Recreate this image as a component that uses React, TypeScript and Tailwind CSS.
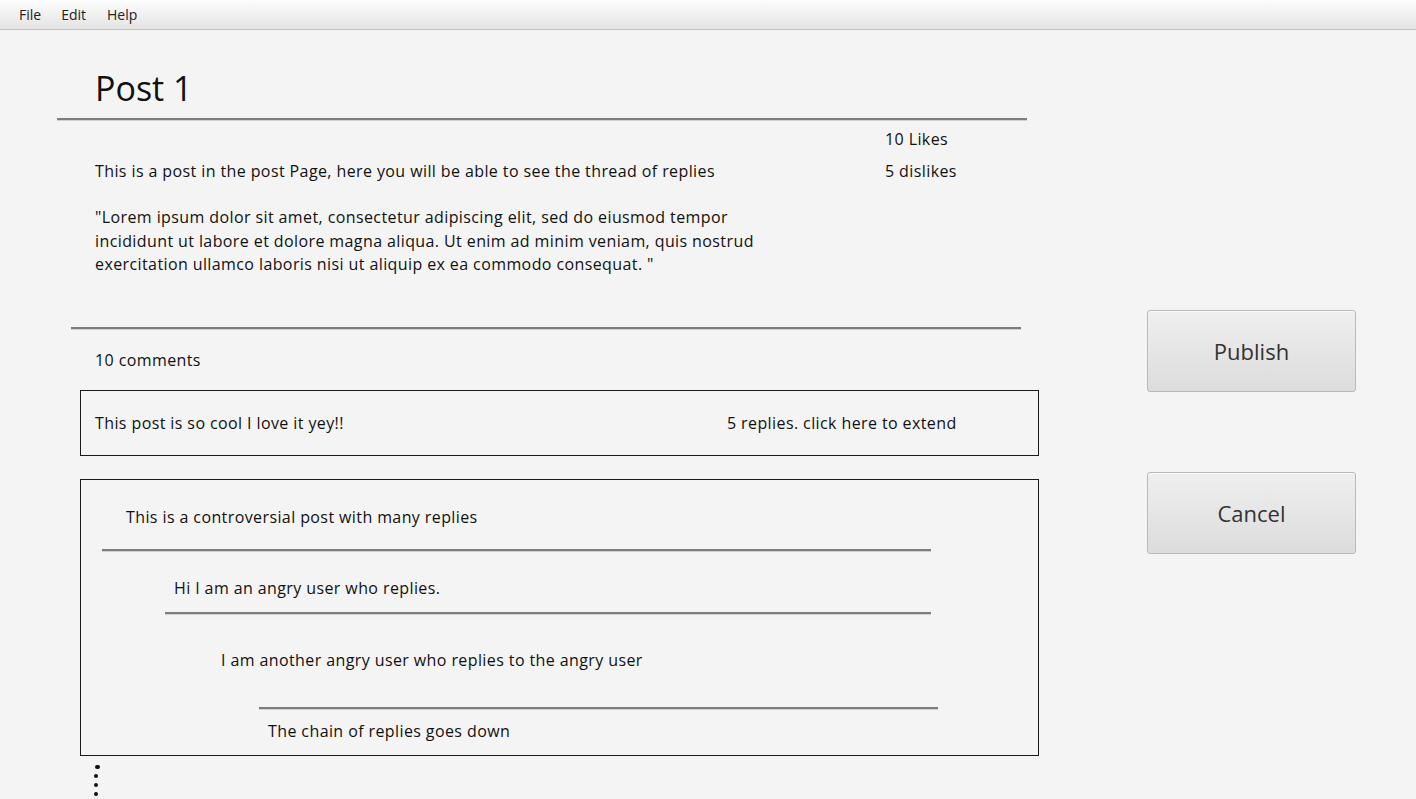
import React from "react";

const font = { fontFamily: '"Open Sans", "Noto Sans", sans-serif' };

function HLine({ cls }: { cls: string }) {
  return <div className={`h-[2px] bg-[#7d7d7d] shadow-[0_1px_0_#d0d0d0] ${cls}`} />;
}

function Btn({ label, cls }: { label: string; cls: string }) {
  return (
    <button
      className={`w-[209px] h-[82px] rounded-[3px] border border-[#b9b9b9] bg-gradient-to-b from-[#efefef] to-[#dcdcdc] shadow-[inset_0_1px_0_#fafafa] text-[22px] text-[#333] ${cls}`}
      style={font}
    >
      {label}
    </button>
  );
}

export default function App() {
  return (
    <div className="w-[1416px] h-[799px] overflow-hidden bg-[#f4f4f4] text-[#111] flex flex-col" style={font}>
      <div className="h-[30px] shrink-0 flex items-center bg-gradient-to-b from-[#fdfdfd] to-[#e4e4e4] border-b border-[#c2c2c2] text-[14px] text-[#222]">
        <span className="ml-[19px]">File</span>
        <span className="ml-[20px]">Edit</span>
        <span className="ml-[21px]">Help</span>
      </div>
      <div className="flex">
        <div className="w-[1045px] flex flex-col text-[16px] tracking-[0.4px]">
          <div className="mt-[38px] h-[40px] pl-[95px] text-[34px] leading-[40px] tracking-normal">Post 1</div>
          <HLine cls="mt-[10px] ml-[57px] w-[970px]" />
          <div className="mt-[8px] h-[22px] leading-[22px] pl-[885px]">10 Likes</div>
          <div className="mt-[10px] h-[22px] leading-[22px] flex pl-[95px]">
            <span className="w-[790px]">This is a post in the post Page, here you will be able to see the thread of replies</span>
            <span>5 dislikes</span>
          </div>
          <div className="mt-[24px] pl-[95px] leading-[23.5px] whitespace-nowrap">
            "Lorem ipsum dolor sit amet, consectetur adipiscing elit, sed do eiusmod tempor
            <br />
            incididunt ut labore et dolore magna aliqua. Ut enim ad minim veniam, quis nostrud
            <br />
            exercitation ullamco laboris nisi ut aliquip ex ea commodo consequat. "
          </div>
          <HLine cls="mt-[50px] ml-[71px] w-[950px]" />
          <div className="mt-[20px] h-[22px] leading-[22px] pl-[95px]">10 comments</div>
          <div className="mt-[19px] ml-[80px] w-[959px] h-[66px] border border-[#1a1a1a] flex items-center pl-[14px]">
            <span className="w-[632px]">This post is so cool I love it yey!!</span>
            <span>5 replies. click here to extend</span>
          </div>
          <div className="mt-[23px] ml-[80px] w-[959px] h-[277px] border border-[#1a1a1a] flex flex-col">
            <div className="mt-[26px] h-[22px] leading-[22px] pl-[45px]">This is a controversial post with many replies</div>
            <HLine cls="mt-[21px] ml-[21px] w-[829px]" />
            <div className="mt-[26px] h-[22px] leading-[22px] pl-[93px]">Hi I am an angry user who replies.</div>
            <HLine cls="mt-[13px] ml-[84px] w-[766px]" />
            <div className="mt-[35px] h-[22px] leading-[22px] pl-[140px]">I am another angry user who replies to the angry user</div>
            <HLine cls="mt-[36px] ml-[178px] w-[679px]" />
            <div className="mt-[11px] h-[22px] leading-[22px] pl-[187px]">The chain of replies goes down</div>
          </div>
          <div className="mt-[9px] ml-[94px] flex flex-col gap-[5px]">
            <div className="w-[5px] h-[4px] rounded-full bg-[#111] ml-[1px]" />
            <div className="w-[4px] h-[4px] rounded-full bg-[#111]" />
            <div className="w-[4px] h-[4px] rounded-full bg-[#111]" />
            <div className="w-[4px] h-[4px] rounded-full bg-[#111]" />
          </div>
        </div>
        <div className="flex flex-col ml-[102px]">
          <Btn label="Publish" cls="mt-[280px]" />
          <Btn label="Cancel" cls="mt-[80px]" />
        </div>
      </div>
    </div>
  );
}
